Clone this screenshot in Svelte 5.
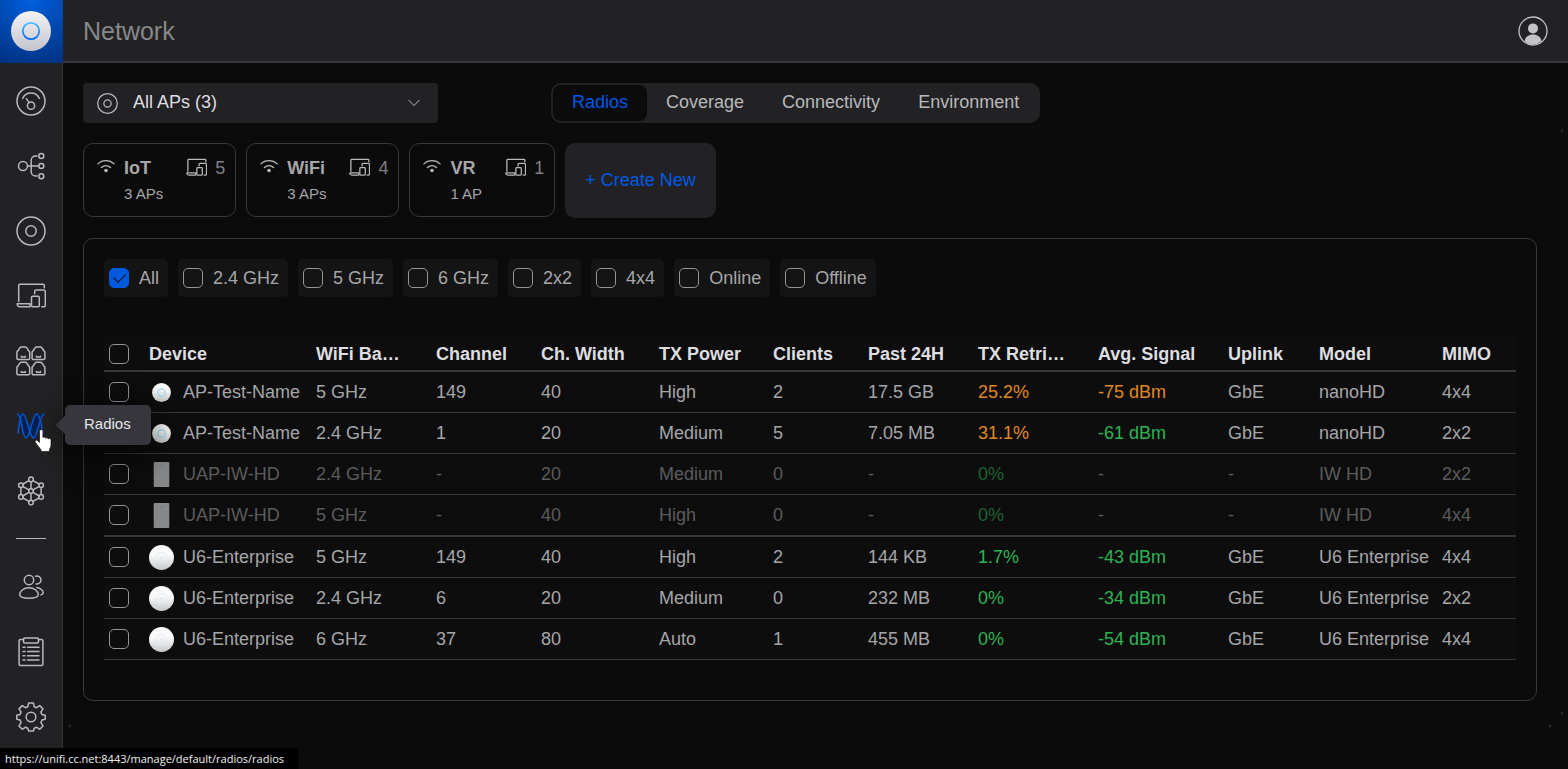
<script lang="ts">
  type IconName =
    | 'dashboard' | 'topology' | 'ap' | 'devices' | 'ports' | 'radios'
    | 'insights' | 'users' | 'log' | 'settings' | 'wifi';

  const mainNav: { icon: IconName; label: string }[] = [
    { icon: 'dashboard', label: 'Dashboard' },
    { icon: 'topology', label: 'Topology' },
    { icon: 'ap', label: 'Devices' },
    { icon: 'devices', label: 'Clients' },
    { icon: 'ports', label: 'Ports' },
    { icon: 'radios', label: 'Radios' },
    { icon: 'insights', label: 'Insights' },
  ];

  const lowerNav: { icon: IconName; label: string }[] = [
    { icon: 'users', label: 'Admins' },
    { icon: 'log', label: 'System Log' },
    { icon: 'settings', label: 'Settings' },
  ];

  const tabs = ['Radios', 'Coverage', 'Connectivity', 'Environment'];
  let activeTab = $state('Radios');

  const networks = [
    { name: 'IoT', aps: '3 APs', clients: 5 },
    { name: 'WiFi', aps: '3 APs', clients: 4 },
    { name: 'VR', aps: '1 AP', clients: 1 },
  ];

  let filters = $state([
    { label: 'All', checked: true },
    { label: '2.4 GHz', checked: false },
    { label: '5 GHz', checked: false },
    { label: '6 GHz', checked: false },
    { label: '2x2', checked: false },
    { label: '4x4', checked: false },
    { label: 'Online', checked: false },
    { label: 'Offline', checked: false },
  ]);

  const columns = [
    { label: 'Device', width: 167 },
    { label: 'WiFi Ba…', width: 120 },
    { label: 'Channel', width: 105 },
    { label: 'Ch. Width', width: 118 },
    { label: 'TX Power', width: 114 },
    { label: 'Clients', width: 95 },
    { label: 'Past 24H', width: 110 },
    { label: 'TX Retri…', width: 120 },
    { label: 'Avg. Signal', width: 130 },
    { label: 'Uplink', width: 91 },
    { label: 'Model', width: 123 },
    { label: 'MIMO', width: 79 },
  ];

  const radios = [
    { type: 'nano', name: 'AP-Test-Name', band: '5 GHz', channel: '149', chWidth: '40', power: 'High', clients: 2, usage: '17.5 GB', retries: '25.2%', retriesLevel: 'warn', signal: '-75 dBm', signalLevel: 'warn', uplink: 'GbE', model: 'nanoHD', mimo: '4x4' },
    { type: 'nano', name: 'AP-Test-Name', band: '2.4 GHz', channel: '1', chWidth: '20', power: 'Medium', clients: 5, usage: '7.05 MB', retries: '31.1%', retriesLevel: 'warn', signal: '-61 dBm', signalLevel: 'good', uplink: 'GbE', model: 'nanoHD', mimo: '2x2' },
    { type: 'wall', name: 'UAP-IW-HD', band: '2.4 GHz', channel: '-', chWidth: '20', power: 'Medium', clients: 0, usage: '-', retries: '0%', retriesLevel: 'good', signal: '-', signalLevel: '', uplink: '-', model: 'IW HD', mimo: '2x2', offline: true },
    { type: 'wall', name: 'UAP-IW-HD', band: '5 GHz', channel: '-', chWidth: '40', power: 'High', clients: 0, usage: '-', retries: '0%', retriesLevel: 'good', signal: '-', signalLevel: '', uplink: '-', model: 'IW HD', mimo: '4x4', offline: true, groupEnd: true },
    { type: 'u6', name: 'U6-Enterprise', band: '5 GHz', channel: '149', chWidth: '40', power: 'High', clients: 2, usage: '144 KB', retries: '1.7%', retriesLevel: 'good', signal: '-43 dBm', signalLevel: 'good', uplink: 'GbE', model: 'U6 Enterprise', mimo: '4x4' },
    { type: 'u6', name: 'U6-Enterprise', band: '2.4 GHz', channel: '6', chWidth: '20', power: 'Medium', clients: 0, usage: '232 MB', retries: '0%', retriesLevel: 'good', signal: '-34 dBm', signalLevel: 'good', uplink: 'GbE', model: 'U6 Enterprise', mimo: '2x2' },
    { type: 'u6', name: 'U6-Enterprise', band: '6 GHz', channel: '37', chWidth: '80', power: 'Auto', clients: 1, usage: '455 MB', retries: '0%', retriesLevel: 'good', signal: '-54 dBm', signalLevel: 'good', uplink: 'GbE', model: 'U6 Enterprise', mimo: '4x4' },
  ];
</script>

{#snippet icon(name: IconName)}
  <svg class="icon" viewBox="0 0 30 30" aria-hidden="true">
    {#if name === 'dashboard'}
      <circle cx="15" cy="15" r="14" />
      <path d="M6.700 12.400a9 9 0 0 1 16.600 0" />
      <circle cx="15" cy="19.700" r="3.600" />
      <path d="M10.300 12.600l3 4" />
    {:else if name === 'topology'}
      <circle cx="7" cy="15" r="4.500" />
      <circle cx="25.300" cy="5" r="2.500" />
      <circle cx="25.300" cy="15" r="2.500" />
      <circle cx="25.300" cy="25.200" r="2.500" />
      <path d="M11.500 15h11.200M21 5h-1.500a4.300 4.300 0 0 0-4.300 4.300v11.500a4.300 4.300 0 0 0 4.300 4.300H21" />
    {:else if name === 'ap'}
      <circle cx="15" cy="15" r="14" />
      <circle cx="15" cy="15" r="5.200" />
    {:else if name === 'devices'}
      <path d="M2.700 20.500v-16a1.200 1.200 0 0 1 1.200-1.200h23.200a1.200 1.200 0 0 1 1.200 1.200v2.300" />
      <path d="M1.200 22.800H14v3H4a2.800 2.800 0 0 1-2.800-3z" />
      <rect x="15.500" y="15.300" width="7.800" height="10.500" rx="1.200" />
      <path d="M18.700 12.800v-2.300a1.500 1.500 0 0 1 1.500-1.500h7.600a1.500 1.500 0 0 1 1.500 1.500v13.800a1.500 1.500 0 0 1-1.500 1.500h-2" />
    {:else if name === 'ports'}
      {#each [[0, 0], [15.2, 0], [0, 15.2], [15.2, 15.2]] as [x, y]}
        <path transform="translate({x} {y})" d="M.9 6.200a1.500 1.500 0 0 1 .6-1.100l1-.7V3.500L4.800 1h5l2.300 2.500v.9l1 .7a1.500 1.500 0 0 1 .6 1.100v6.100a1.300 1.300 0 0 1-1.300 1.300H2.200A1.300 1.300 0 0 1 .9 12.300zM5.300 10.300v.7h4v-.7" />
      {/each}
    {:else if name === 'radios'}
      <path class="wave-fill" d="M7 3c4 0 6.500 24 10.500 24S24 3 28 3h-7.500C16.500 3 14 27 10 27S6 5 2 3z" />
      <path d="M2 22C3.500 10 5 3 7 3c4 0 6.500 24 10.500 24S24 3 28 3" />
      <path d="M2 3c4 2 4 24 8 24S16.500 3 20.500 3c3 0 5 10 6.500 19" />
    {:else if name === 'insights'}
      <path d="M15 5.800v6.800M6.700 10.300l6.200 3.500M23.300 10.300l-6.200 3.500M6.700 20l6.200-3.600M23.300 20l-6.200-3.600M15 17.600v7M12.900 4.700L7 8M17.100 4.700L23 8M4.900 11.600v6.900M25.100 11.600v6.900M7 22l6 3.300M23 22l-6 3.300" />
      {#each [[15, 3.4], [4.9, 9.2], [25.1, 9.2], [15, 15], [4.9, 20.9], [25.1, 20.9], [15, 26.6]] as [x, y]}
        <circle cx={x} cy={y} r="2.300" />
      {/each}
    {:else if name === 'users'}
      <circle cx="13" cy="8" r="4.700" />
      <path d="M13 15.800c5.600 0 9.300 3.600 9.300 6.700 0 2.300-4 3.700-9.300 3.700s-9.300-1.400-9.300-3.700c0-3.100 3.700-6.700 9.300-6.700z" />
      <path d="M19.500 4.300a4 4 0 1 1 .6 7.600M20.800 15.500c3.800.5 6.400 3.200 6.400 5.300 0 1-.9 1.700-2.200 2.100" />
    {:else if name === 'log'}
      <path d="M7.500 2.600H4.300a1.200 1.200 0 0 0-1.200 1.200v23.400a1.200 1.200 0 0 0 1.200 1.200h21.400a1.200 1.200 0 0 0 1.200-1.200V3.800a1.200 1.200 0 0 0-1.200-1.200h-3.200" />
      <rect x="7.500" y="1" width="15" height="5" rx="1.200" />
      <path d="M7 10.300h2M11.500 10.300H23M7 14.500h2M11.500 14.500H23M7 18.700h2M11.500 18.700H23M7 23h2M11.500 23H23" />
    {:else if name === 'settings'}
      <circle cx="15" cy="15" r="4.800" />
      <path d="M12.600 1h4.800l.8 3.700 2.300 1 3.200-2.100 3.300 3.300-2.100 3.200 1 2.300 3.300.8v4l-3.300.8-1 2.700 2.100 3.200-3.300 3.400-3.200-2.100-2.300 1-.8 2.800h-4.800l-.8-2.800-2.300-1-3.200 2.100L3 23.900l2.100-3.200-1-2.700-3.300-.8v-4l3.300-.8 1-2.300L3 6.900l3.300-3.300 3.200 2.100 2.300-1z" />
    {:else if name === 'wifi'}
      <path class="thick" d="M1.500 11.500c7.500-7.300 19.500-7.300 27 0M7.500 17.500c4.300-4 10.700-4 15 0" />
      <circle class="solid" cx="15" cy="22.500" r="3" />
    {/if}
  </svg>
{/snippet}

{#snippet deviceImage(type: string)}
  <svg class="device-image" viewBox="0 0 25 25" aria-hidden="true">
    <defs>
      <linearGradient id="shell-{type}" x1="0" y1="0" x2="0" y2="1">
        <stop offset="0.4" stop-color="#fafafa" />
        <stop offset="1" stop-color="#c6c8ca" />
      </linearGradient>
    </defs>
    {#if type === 'nano'}
      <circle cx="12.500" cy="12.500" r="9.400" fill="url(#shell-nano)" />
      <circle cx="12.500" cy="12.500" r="3.700" fill="none" stroke="#9fd8ee" stroke-width="1.200" />
      <circle cx="12.500" cy="12.500" r=".6" fill="#c3d2d8" />
    {:else if type === 'wall'}
      <rect x="4.700" y="0" width="15.600" height="25" rx="1" fill="#87888a" />
      <rect x="11.300" y="3.500" width="2.400" height="1" fill="#5f7f8a" />
      <circle cx="12.500" cy="12.500" r=".6" fill="#7b7c7e" />
    {:else}
      <circle cx="12.500" cy="12.500" r="12.500" fill="url(#shell-u6)" />
      <circle cx="12.500" cy="12.500" r="5" fill="none" stroke="#e2edf8" />
      <circle cx="12.500" cy="12.500" r="1" fill="#dfe0e2" />
    {/if}
  </svg>
{/snippet}

<div class="app">
  <aside class="sidebar">
    <a class="logo" href="#home" aria-label="Home">
      <svg viewBox="0 0 40 40" aria-hidden="true">
        <defs>
          <linearGradient id="disc" x1="0" y1="0" x2="0" y2="1">
            <stop offset="0" stop-color="#f4f4f6" />
            <stop offset="1" stop-color="#c3c4cd" />
          </linearGradient>
          <linearGradient id="ring" x1="0" y1="0" x2="0" y2="1">
            <stop offset="0" stop-color="#48c0ff" />
            <stop offset="1" stop-color="#0066ff" />
          </linearGradient>
        </defs>
        <circle cx="20" cy="20" r="20" fill="url(#disc)" />
        <circle cx="20" cy="20" r="8.200" fill="none" stroke="url(#ring)" stroke-width="1.800" />
      </svg>
    </a>

    <nav class="nav" aria-label="Main">
      {#each mainNav as item}
        <a class="nav-item" class:active={item.icon === 'radios'} href="#{item.icon}" aria-label={item.label}>
          {@render icon(item.icon)}
          {#if item.icon === 'radios'}
            <span class="tooltip">{item.label}</span>
            <svg class="pointer" viewBox="0 0 18 24" aria-hidden="true">
              <path d="M5.500 2.200a1.700 1.700 0 0 1 3.400 0V8.500a1.600 1.600 0 0 1 2.700.7 1.600 1.600 0 0 1 2.700.8 1.500 1.500 0 0 1 2.700 1v5c0 2-1.500 3.500-1.500 4.500v2H7v-1.800C5.500 19 2.500 15 1.300 13.200c-.9-1.500.8-2.700 2.200-1.500l2 1.800z" />
            </svg>
          {/if}
        </a>
      {/each}
      <hr />
      {#each lowerNav as item}
        <a class="nav-item" href="#{item.icon}" aria-label={item.label}>
          {@render icon(item.icon)}
        </a>
      {/each}
    </nav>
  </aside>

  <div class="page">
    <header class="header">
      <h1>Network</h1>
      <button class="account" aria-label="Account">
        <svg viewBox="0 0 30 30" aria-hidden="true">
          <circle cx="15" cy="15" r="14" fill="none" stroke="#c3c3c6" stroke-width="1.300" />
          <circle cx="15" cy="12.400" r="5" fill="#c3c3c6" />
          <path d="M6.500 25.200c.8-4.300 4.300-6.600 8.500-6.600s7.700 2.300 8.500 6.600A13.500 13.500 0 0 1 15 28.500a13.500 13.500 0 0 1-8.500-3.300z" fill="#c3c3c6" />
        </svg>
      </button>
    </header>

    <main class="content">
      <div class="toolbar">
        <div class="ap-select">
          <span class="ap-icon">{@render icon('ap')}</span>
          <select aria-label="Access points">
            <option>All APs (3)</option>
          </select>
          <svg class="chevron" viewBox="0 0 12 8" aria-hidden="true"><path d="M.5 1L6 6.500 11.500 1" /></svg>
        </div>

        <div class="tabs" role="tablist">
          {#each tabs as tab}
            <button
              role="tab"
              class:active={activeTab === tab}
              aria-selected={activeTab === tab}
              onclick={() => (activeTab = tab)}>{tab}</button>
          {/each}
        </div>
      </div>

      <div class="networks">
        {#each networks as network}
          <button class="network">
            <span class="wifi">{@render icon('wifi')}</span>
            <span class="names">
              <strong>{network.name}</strong>
              <small>{network.aps}</small>
            </span>
            <span class="clients">{@render icon('devices')}{network.clients}</span>
          </button>
        {/each}
        <button class="create">+ Create New</button>
      </div>

      <section class="panel">
        <div class="filters">
          {#each filters as filter}
            <label>
              <input type="checkbox" bind:checked={filter.checked} />
              {filter.label}
            </label>
          {/each}
        </div>

        <table>
          <colgroup>
            <col style="width: 40px" />
            {#each columns as column}
              <col style="width: {column.width}px" />
            {/each}
          </colgroup>
          <thead>
            <tr>
              <th><input type="checkbox" aria-label="Select all" /></th>
              {#each columns as column}
                <th scope="col">{column.label}</th>
              {/each}
            </tr>
          </thead>
          <tbody>
            {#each radios as radio}
              <tr class:offline={radio.offline} class:group-end={radio.groupEnd}>
                <td><input type="checkbox" aria-label="Select {radio.name} {radio.band}" /></td>
                <td>
                  <span class="device">{@render deviceImage(radio.type)}<span>{radio.name}</span></span>
                </td>
                <td><span>{radio.band}</span></td>
                <td><span>{radio.channel}</span></td>
                <td><span>{radio.chWidth}</span></td>
                <td><span>{radio.power}</span></td>
                <td><span>{radio.clients}</span></td>
                <td><span>{radio.usage}</span></td>
                <td><span class={radio.retriesLevel}>{radio.retries}</span></td>
                <td><span class={radio.signalLevel}>{radio.signal}</span></td>
                <td><span>{radio.uplink}</span></td>
                <td><span>{radio.model}</span></td>
                <td><span>{radio.mimo}</span></td>
              </tr>
            {/each}
          </tbody>
        </table>
      </section>
    </main>

    <i class="scroll-arrow up"></i>
    <i class="scroll-arrow down"></i>
    <i class="scroll-arrow left"></i>
    <i class="scroll-arrow right"></i>
  </div>

  <div class="status">https://unifi.cc.net:8443/manage/default/radios/radios</div>
</div>

<style>
  :global(body) {
    background: #0b0b0b;
  }

  .app {
    display: flex;
    min-height: 100vh;
    color: #a6a6a8;
    font-family: Arial, "Liberation Sans", sans-serif;
    font-size: 18px;
    line-height: 22px;
  }

  .app * {
    box-sizing: border-box;
  }

  button,
  select {
    margin: 0;
    border: 0;
    color: inherit;
    font: inherit;
    cursor: pointer;
  }

  .icon {
    display: block;
    width: 30px;
    height: 30px;
    fill: none;
    stroke: #b9b9bc;
    stroke-width: 1.5;
    stroke-linecap: round;
    stroke-linejoin: round;
  }

  /* Sidebar */
  .sidebar {
    flex: none;
    width: 63px;
    background: #222224;
    border-right: 1px solid #333336;
  }

  .logo {
    display: flex;
    align-items: center;
    justify-content: center;
    height: 63px;
    margin-right: -1px;
    padding: 0 1px 1px 0;
    background: radial-gradient(circle at 50% 0, #0060e0, #003384 95%);
  }

  .logo svg {
    width: 40px;
    height: 40px;
  }

  .nav {
    padding-top: 5px;
  }

  .nav-item {
    position: relative;
    display: flex;
    align-items: center;
    justify-content: center;
    height: 65px;
    padding-right: 1px;
  }

  .nav-item.active .icon {
    stroke: #0059dd;
  }

  .wave-fill {
    fill: #00204f;
    stroke: none;
  }

  .nav hr {
    width: 30px;
    height: 1px;
    margin: 15px auto;
    border: 0;
    background: #b9b9bc;
  }

  .tooltip {
    position: absolute;
    z-index: 2;
    top: 12px;
    left: 65px;
    padding: 8px 20px 10px 19px;
    border-radius: 5px;
    background: #36363c;
    box-shadow: 0 8px 36px rgba(0, 0, 0, 0.75);
    color: #e6e6e8;
    font-size: 15px;
  }

  .tooltip::before {
    content: "";
    position: absolute;
    top: 10px;
    left: -9px;
    width: 10px;
    height: 20px;
    background: #36363c;
    clip-path: polygon(100% 0, 10% 42%, 0 50%, 10% 58%, 100% 100%);
  }

  .pointer {
    position: absolute;
    z-index: 3;
    top: 36px;
    left: 34px;
    width: 18px;
    height: 24px;
    fill: #fff;
    stroke: #000;
    stroke-width: 0.6;
  }

  /* Header */
  .page {
    position: relative;
    flex: 1;
    min-width: 0;
  }

  .header {
    display: flex;
    align-items: center;
    justify-content: space-between;
    height: 63px;
    padding: 0 20px;
    background: #222224;
    border-bottom: 2px solid #38383c;
  }

  h1 {
    margin: 0;
    color: #88888a;
    font-size: 25px;
    font-weight: 400;
    line-height: 30px;
  }

  .account {
    padding: 0;
    background: none;
  }

  .account svg {
    display: block;
    width: 30px;
    height: 30px;
  }

  /* Toolbar */
  .content {
    padding: 20px 31px 20px 20px;
  }

  .toolbar {
    display: flex;
    gap: 113px;
  }

  .ap-select {
    display: grid;
    grid-template-columns: 50px 1fr 30px;
    align-items: center;
    width: 355px;
    height: 40px;
    border-radius: 4px;
    background: #222224;
  }

  .ap-select > * {
    grid-row: 1;
    pointer-events: none;
  }

  .ap-icon {
    grid-column: 1;
    z-index: 1;
    padding-left: 14px;
  }

  .ap-icon .icon,
  .clients .icon {
    width: 21px;
    height: 21px;
    stroke-width: 1.8;
  }

  .ap-select select {
    grid-column: 1 / -1;
    height: 40px;
    padding: 0 36px 2px 50px;
    border-radius: 4px;
    background: transparent;
    color: #dedee2;
    appearance: none;
    pointer-events: auto;
  }

  .chevron {
    grid-column: 3;
    width: 12px;
    height: 8px;
    fill: none;
    stroke: #b9b9bc;
  }

  .tabs {
    display: flex;
    padding: 2px;
    border-radius: 10px;
    background: #222224;
  }

  .tabs button {
    padding: 0 19px 2px;
    border-radius: 8px;
    background: none;
    color: #b9b9bc;
  }

  .tabs button.active {
    background: #0b0b0b;
    color: #0059e6;
  }

  /* Network cards */
  .networks {
    display: flex;
    gap: 10px;
    margin-top: 20px;
  }

  .network {
    display: flex;
    align-items: flex-start;
    height: 74px;
    padding: 13px 10px 0 13px;
    border: 1px solid #38383c;
    border-radius: 10px;
    background: none;
    text-align: left;
  }

  .wifi .icon {
    width: 18px;
    height: 18px;
    margin-right: 9px;
  }

  .thick {
    stroke-width: 2.2;
  }

  .solid {
    fill: #b9b9bc;
    stroke: none;
  }

  .names strong,
  .names small {
    display: block;
  }

  .names small {
    margin-top: 4px;
    font-size: 15px;
  }

  .clients {
    display: flex;
    gap: 8px;
    margin-left: 23px;
    color: #808084;
  }

  .create {
    height: 75px;
    padding: 0 20px 2px;
    border-radius: 10px;
    background: #222224;
    color: #0059e6;
  }

  /* Radios panel */
  .panel {
    margin-top: 20px;
    padding: 20px 20px 40px;
    border: 1px solid #38383a;
    border-radius: 10px;
  }

  .filters {
    display: flex;
    gap: 10px;
    margin-bottom: 40px;
  }

  .filters label {
    display: flex;
    align-items: center;
    gap: 10px;
    height: 38px;
    padding: 0 9px 0 5px;
    border-radius: 5px;
    background: #141414;
    cursor: pointer;
  }

  input[type="checkbox"] {
    display: grid;
    place-items: center;
    width: 20px;
    height: 20px;
    margin: 0;
    border: 1px solid #94949e;
    border-radius: 5px;
    appearance: none;
    cursor: pointer;
  }

  input[type="checkbox"]:checked {
    border-color: #0059dd;
    background: #0059dd;
  }

  input[type="checkbox"]:checked::after {
    content: "";
    width: 10px;
    height: 6px;
    margin-bottom: 3px;
    border: solid #0b0b0b;
    border-width: 0 0 1px 1px;
    transform: rotate(-45deg);
  }

  table {
    width: 100%;
    table-layout: fixed;
    border-collapse: separate;
    border-spacing: 0;
    background: #0d0d0d;
  }

  th,
  td {
    height: 41px;
    padding: 0 0 0 5px;
    border-bottom: 1px solid #38383a;
    text-align: left;
    vertical-align: middle;
    white-space: nowrap;
  }

  th {
    height: 35px;
    border-bottom-width: 2px;
    color: #dedee0;
    font-weight: 700;
  }

  .group-end td {
    height: 42px;
    border-bottom-width: 2px;
  }

  .device {
    display: flex;
    align-items: center;
    gap: 9px;
  }

  .device-image {
    flex: none;
    width: 25px;
    height: 25px;
  }

  .warn {
    color: #e08a1e;
  }

  .good {
    color: #2cb352;
  }

  .offline td span:not(.device) {
    opacity: 0.5;
  }

  /* Scroll area end marks */
  .scroll-arrow {
    position: absolute;
    width: 4px;
    height: 4px;
    background: #232325;
  }

  .up {
    top: 128px;
    right: 4px;
    clip-path: polygon(50% 0, 100% 100%, 0 100%);
  }

  .down {
    right: 4px;
    bottom: 53px;
    clip-path: polygon(0 0, 100% 0, 50% 100%);
  }

  .left {
    bottom: 41px;
    left: 4px;
    clip-path: polygon(0 50%, 100% 0, 100% 100%);
  }

  .right {
    right: 15px;
    bottom: 41px;
    clip-path: polygon(0 0, 100% 50%, 0 100%);
  }

  .status {
    position: fixed;
    bottom: 0;
    left: 0;
    padding: 0 14px 0 5px;
    border-radius: 0 3px 0 0;
    background: #000;
    color: #f2f2f2;
    font-family: "Segoe UI", "Open Sans", sans-serif;
    font-size: 11px;
    line-height: 21px;
  }
</style>
